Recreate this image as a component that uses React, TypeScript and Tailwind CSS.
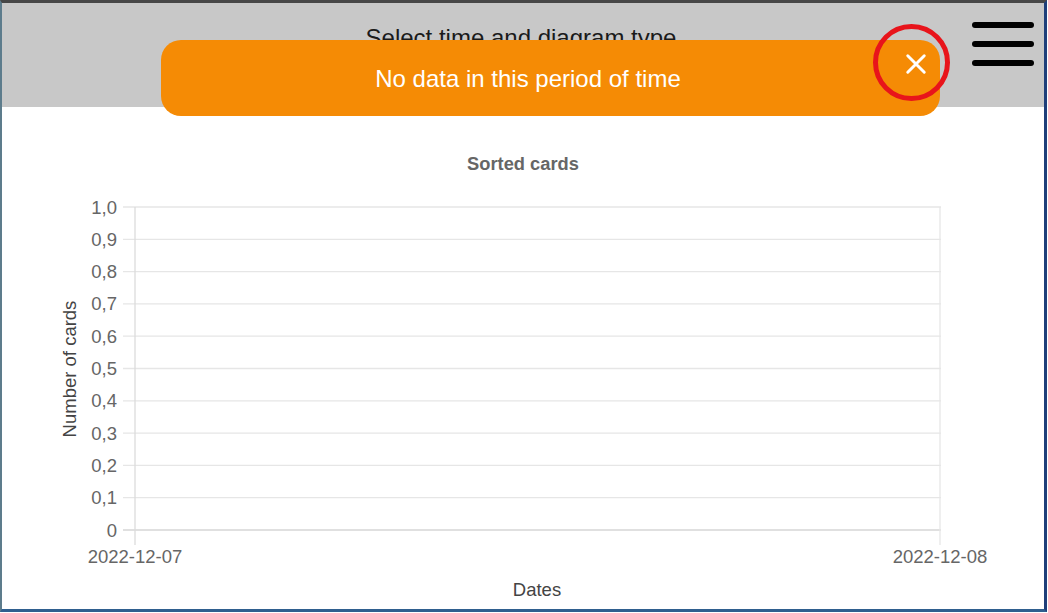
import React from "react";

const yLabels = ["1,0", "0,9", "0,8", "0,7", "0,6", "0,5", "0,4", "0,3", "0,2", "0,1", "0"];

function Chart() {
  const ox = 2;
  const oy = 107;
  const top = 207;
  const step = 32.3;
  const font = "'Liberation Sans', Arial, sans-serif";
  const fs = 18.5;
  return (
    <svg width={1043} height={501} viewBox={`0 0 1043 501`} className="block">
      <g transform={`translate(${-ox},${-oy})`} fontFamily={font}>
        <text x={523} y={170} textAnchor="middle" fontSize={18.3} fontWeight={700} fill="#666">
          Sorted cards
        </text>
        {yLabels.map((l, i) => {
          const y = top + i * step;
          return (
            <g key={l}>
              <line x1={123} x2={941} y1={y} y2={y} stroke={i === 10 ? "#d6d6d6" : "#e6e6e6"} strokeWidth={1.3} />
              <text x={117} y={y + 6.5} textAnchor="end" fontSize={fs} fill="#666">
                {l}
              </text>
            </g>
          );
        })}
        <line x1={135} x2={135} y1={top} y2={545} stroke="#dcdcdc" strokeWidth={1.3} />
        <line x1={940} x2={940} y1={top} y2={545} stroke="#e6e6e6" strokeWidth={1.3} />
        <text x={135} y={563} textAnchor="middle" fontSize={fs} fill="#666">
          2022-12-07
        </text>
        <text x={940} y={563} textAnchor="middle" fontSize={fs} fill="#666">
          2022-12-08
        </text>
        <text x={537} y={596} textAnchor="middle" fontSize={fs} fill="#444">
          Dates
        </text>
        <text
          x={0}
          y={0}
          transform="translate(76,369) rotate(-90)"
          textAnchor="middle"
          fontSize={fs}
          fill="#444"
        >
          Number of cards
        </text>
      </g>
    </svg>
  );
}

export default function App() {
  return (
    <div className="w-[1048px] h-[613px] bg-white" style={{ fontFamily: "'Liberation Sans', Arial, sans-serif" }}>
      <div className="relative w-[1047px] h-[612px] border-t-[3px] border-t-[#474747] border-l-2 border-l-[#5d7c8c] border-r-[3px] border-r-[#1f3f7a] border-b-[3px] border-b-[#2f5f8f] overflow-hidden">
        <div className="relative h-[104px] bg-[#c8c8c8]">
          <div className="pt-[21px] text-center text-[24px] leading-[28px] text-[#1a1a1a] pr-[4px]">
            Select time and diagram type
          </div>
          <div className="absolute left-[970px] top-[19px] flex flex-col gap-[13px]">
            <div className="w-[62px] h-[6px] rounded-full bg-black" />
            <div className="w-[62px] h-[6px] rounded-full bg-black" />
            <div className="w-[62px] h-[6px] rounded-full bg-black" />
          </div>
        </div>
        <Chart />
        <div className="absolute left-[159px] top-[37px] w-[779px] h-[76px] rounded-[20px] bg-[#f58b05] flex items-center justify-center">
          <span className="text-white text-[24px] leading-none pr-[45px] pt-[1px]">No data in this period of time</span>
          <svg className="absolute left-[744px] top-[13px]" width="22" height="22" viewBox="0 0 24 24">
            <path d="M3 3 L21 21 M21 3 L3 21" stroke="#fff" strokeWidth="3.2" strokeLinecap="round" />
          </svg>
        </div>
        <div className="absolute left-[871px] top-[21px] w-[77px] h-[77px] rounded-full border-[5px] border-[#e8141b]" />
      </div>
    </div>
  );
}
